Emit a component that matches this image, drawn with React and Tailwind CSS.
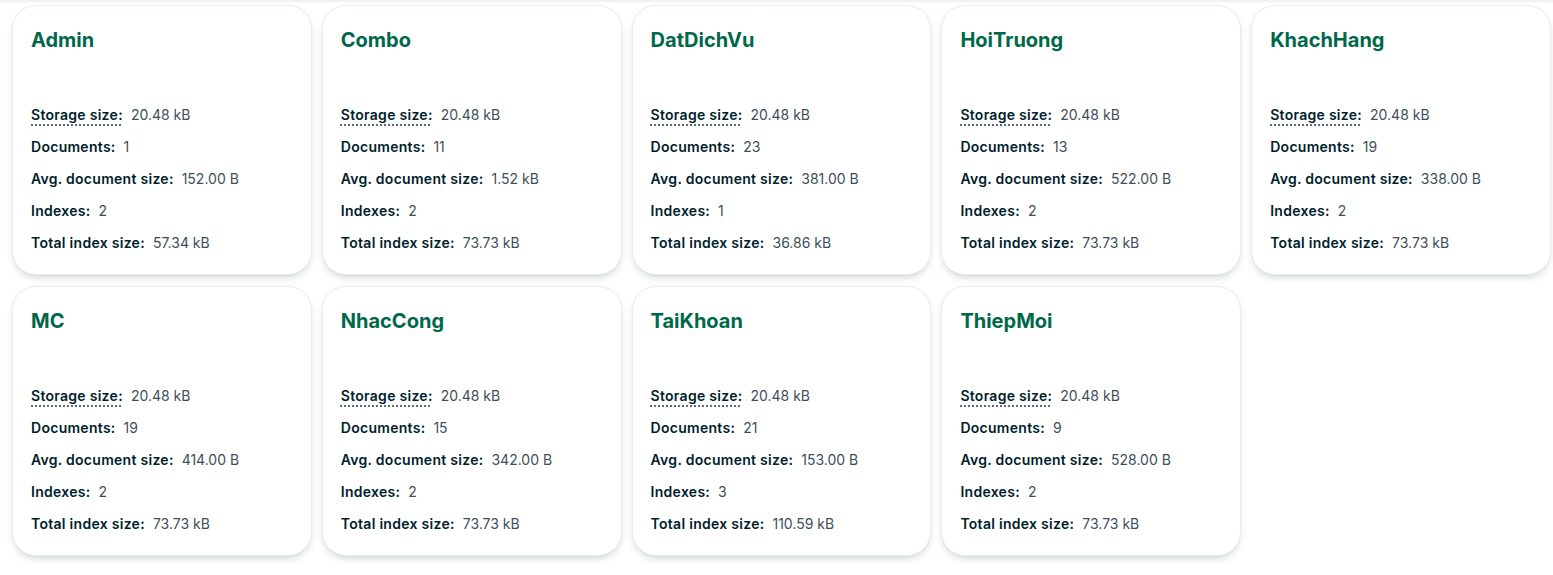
const COLLECTIONS = [
  { name: "Admin", docs: "1", avg: "152.00 B", indexes: "2", indexSize: "57.34 kB" },
  { name: "Combo", docs: "11", avg: "1.52 kB", indexes: "2", indexSize: "73.73 kB" },
  { name: "DatDichVu", docs: "23", avg: "381.00 B", indexes: "1", indexSize: "36.86 kB" },
  { name: "HoiTruong", docs: "13", avg: "522.00 B", indexes: "2", indexSize: "73.73 kB" },
  { name: "KhachHang", docs: "19", avg: "338.00 B", indexes: "2", indexSize: "73.73 kB" },
  { name: "MC", docs: "19", avg: "414.00 B", indexes: "2", indexSize: "73.73 kB" },
  { name: "NhacCong", docs: "15", avg: "342.00 B", indexes: "2", indexSize: "73.73 kB" },
  { name: "TaiKhoan", docs: "21", avg: "153.00 B", indexes: "3", indexSize: "110.59 kB" },
  { name: "ThiepMoi", docs: "9", avg: "528.00 B", indexes: "2", indexSize: "73.73 kB" },
];

function Stat({ label, value, dotted }) {
  return (
    <div className="h-8 flex items-center text-[14px]">
      <span
        className={
          "font-semibold tracking-[0.02em] text-[#001E2B] " +
          (dotted
            ? "underline decoration-dotted decoration-2 decoration-[#5c6c75] underline-offset-[5px]"
            : "")
        }
      >
        {label}
      </span>
      <span className="ml-2 text-[#3D4F58]">{value}</span>
    </div>
  );
}

function CollectionCard({ c }) {
  return (
    <div className="h-[270px] rounded-[24px] bg-white border border-[#e8edeb] shadow-[0_4px_10px_-4px_rgba(0,30,43,0.3)] px-[18px] pt-[20px] pb-4 flex flex-col">
      <h2 className="text-[20px] leading-7 font-bold text-[#00684A]">
        {c.name}
      </h2>
      <div className="mt-auto">
        <Stat label="Storage size:" value="20.48 kB" dotted />
        <Stat label="Documents:" value={c.docs} />
        <Stat label="Avg. document size:" value={c.avg} />
        <Stat label="Indexes:" value={c.indexes} />
        <Stat label="Total index size:" value={c.indexSize} />
      </div>
    </div>
  );
}

export default function App() {
  return (
    <div
      className="min-h-screen bg-white"
      style={{ fontFamily: "Inter, 'Noto Sans', sans-serif" }}
    >
      <div className="h-1 bg-gradient-to-b from-[#eceeee] to-white" />
      <div className="grid grid-cols-5 gap-x-[10px] gap-y-[11px] pl-[12px] pr-[2px] pt-[1px]">
        {COLLECTIONS.map((c) => (
          <CollectionCard key={c.name} c={c} />
        ))}
      </div>
    </div>
  );
}
